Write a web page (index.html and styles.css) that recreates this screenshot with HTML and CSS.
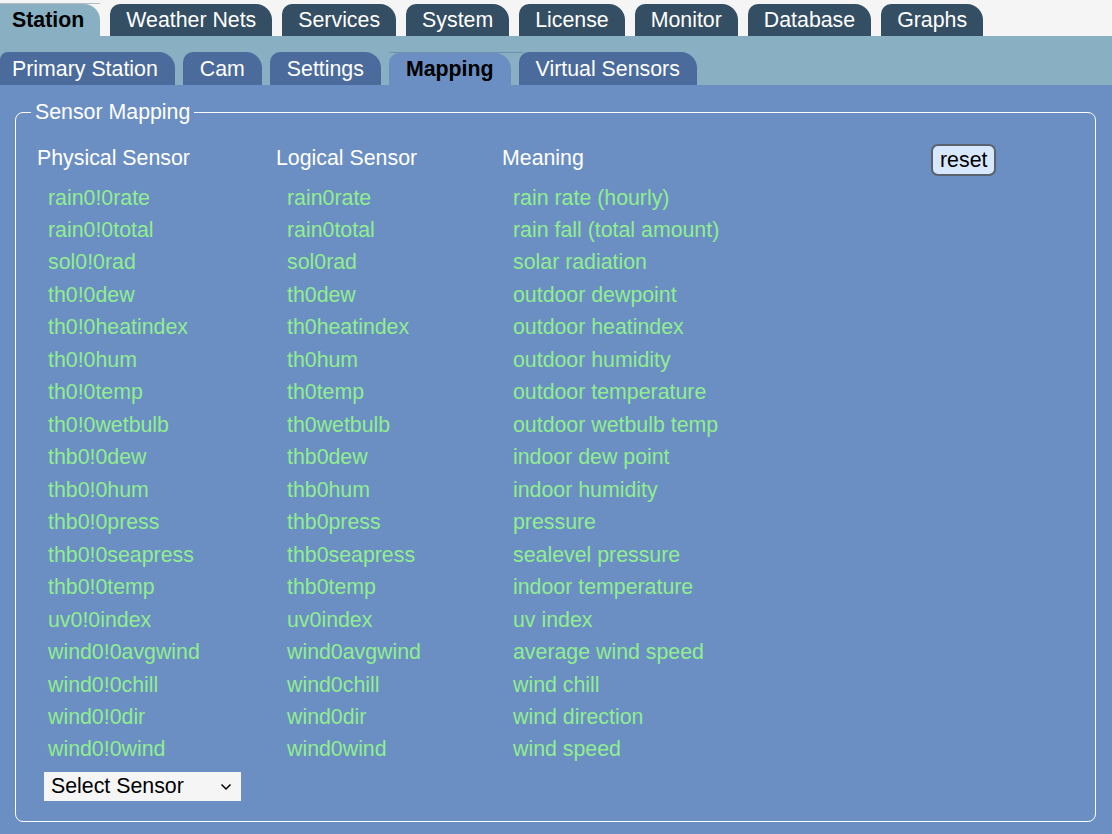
FILE: index.html
```html
<!DOCTYPE html>
<html>
<head>
<meta charset="utf-8">
<link rel="stylesheet" href="styles.css">
</head>
<body>
<div class="topbar">
  <nav class="tabs main-tabs">
    <span class="tab active">Station</span>
    <span class="tab">Weather Nets</span>
    <span class="tab">Services</span>
    <span class="tab">System</span>
    <span class="tab">License</span>
    <span class="tab">Monitor</span>
    <span class="tab">Database</span>
    <span class="tab">Graphs</span>
  </nav>
</div>
<div class="subbar">
  <nav class="tabs sub-tabs">
    <span class="tab">Primary Station</span>
    <span class="tab">Cam</span>
    <span class="tab">Settings</span>
    <span class="tab active">Mapping</span>
    <span class="tab">Virtual Sensors</span>
  </nav>
</div>
<main class="content">
  <fieldset class="mapping">
    <legend>Sensor Mapping</legend>
    <div class="grid">
      <div class="hd">Physical Sensor</div>
      <div class="hd">Logical Sensor</div>
      <div class="hd">Meaning</div>
      <div class="hd"><button class="reset">reset</button></div>

      <div class="cell">rain0!0rate</div><div class="cell">rain0rate</div><div class="cell wide">rain rate (hourly)</div>
      <div class="cell">rain0!0total</div><div class="cell">rain0total</div><div class="cell wide">rain fall (total amount)</div>
      <div class="cell">sol0!0rad</div><div class="cell">sol0rad</div><div class="cell wide">solar radiation</div>
      <div class="cell">th0!0dew</div><div class="cell">th0dew</div><div class="cell wide">outdoor dewpoint</div>
      <div class="cell">th0!0heatindex</div><div class="cell">th0heatindex</div><div class="cell wide">outdoor heatindex</div>
      <div class="cell">th0!0hum</div><div class="cell">th0hum</div><div class="cell wide">outdoor humidity</div>
      <div class="cell">th0!0temp</div><div class="cell">th0temp</div><div class="cell wide">outdoor temperature</div>
      <div class="cell">th0!0wetbulb</div><div class="cell">th0wetbulb</div><div class="cell wide">outdoor wetbulb temp</div>
      <div class="cell">thb0!0dew</div><div class="cell">thb0dew</div><div class="cell wide">indoor dew point</div>
      <div class="cell">thb0!0hum</div><div class="cell">thb0hum</div><div class="cell wide">indoor humidity</div>
      <div class="cell">thb0!0press</div><div class="cell">thb0press</div><div class="cell wide">pressure</div>
      <div class="cell">thb0!0seapress</div><div class="cell">thb0seapress</div><div class="cell wide">sealevel pressure</div>
      <div class="cell">thb0!0temp</div><div class="cell">thb0temp</div><div class="cell wide">indoor temperature</div>
      <div class="cell">uv0!0index</div><div class="cell">uv0index</div><div class="cell wide">uv index</div>
      <div class="cell">wind0!0avgwind</div><div class="cell">wind0avgwind</div><div class="cell wide">average wind speed</div>
      <div class="cell">wind0!0chill</div><div class="cell">wind0chill</div><div class="cell wide">wind chill</div>
      <div class="cell">wind0!0dir</div><div class="cell">wind0dir</div><div class="cell wide">wind direction</div>
      <div class="cell">wind0!0wind</div><div class="cell">wind0wind</div><div class="cell wide">wind speed</div>
    </div>
    <div class="select-wrap">
      <select class="sensor-select"><option>Select Sensor</option></select>
      <svg class="chev" width="12" height="8" viewBox="0 0 12 8"><path d="M1.5 1.5 L6 6 L10.5 1.5" fill="none" stroke="#000" stroke-width="1.5"/></svg>
    </div>
  </fieldset>
</main>
</body>
</html>
```

FILE: styles.css
```css
html, body {
  margin: 0;
  padding: 0;
}
body {
  font-family: "Liberation Sans", Arial, sans-serif;
  font-size: 16pt;
  background: #6b8fc2;
  width: 1112px;
  height: 834px;
  overflow: hidden;
}
.topbar {
  background: #f5f5f5;
  height: 36px;
  display: flex;
  align-items: flex-end;
}
.subbar {
  background: #88b0c2;
  height: 49px;
  display: flex;
  align-items: flex-end;
}
.tabs {
  display: flex;
  align-items: flex-end;
}
.main-tabs {
  gap: 10px;
}
.sub-tabs {
  gap: 8px;
}
.tab {
  position: relative;
  display: flex;
  align-items: center;
  color: #ffffff;
  white-space: nowrap;
  border-radius: 10px 16px 0 0;
  padding-top: 1px;
  box-sizing: border-box;
}
.main-tabs .tab {
  height: 32px;
  padding-left: 16px;
  padding-right: 16px;
  background: #344e64;
}
.main-tabs .tab:first-child {
  padding-left: 12px;
  padding-right: 16px;
  border-radius: 0 16px 0 0;
}
.main-tabs .tab.active {
  background: #88b0c2;
  color: #000;
  font-weight: bold;
}
.main-tabs .tab.active::before {
  content: "";
  position: absolute;
  left: 0;
  right: 0;
  top: -1px;
  height: 1px;
  background: #b4bcc2;
}
.sub-tabs .tab {
  height: 33px;
  padding-left: 17px;
  padding-right: 17px;
  background: #4a6b9b;
}
.sub-tabs .tab:first-child {
  padding-left: 12px;
  padding-right: 17px;
  border-radius: 8px 16px 0 0;
}
.sub-tabs .tab.active {
  background: #6b8fc2;
  color: #000;
  font-weight: bold;
  height: 32px;
}
.sub-tabs .tab.active::before {
  content: "";
  position: absolute;
  left: 0;
  right: -12px;
  top: -1px;
  height: 1px;
  background: #6f8fae;
}
.content {
  padding: 15px 16px 0 15px;
}
.mapping {
  margin: 0;
  border: 1px solid #ffffff;
  border-radius: 8px;
  padding: 12px 16px 20px 21px;
  color: #ffffff;
}
.mapping legend {
  color: #ffffff;
  padding: 0 4px;
  margin-left: -6px;
  line-height: 24px;
}
.grid {
  display: grid;
  grid-template-columns: 239px 226px 429px auto;
  grid-template-rows: 45.5px;
  grid-auto-rows: 32.47px;
  align-items: center;
}
.grid .hd {
  height: 45.5px;
  display: flex;
  align-items: center;
  color: #ffffff;
}
.grid .cell {
  color: #90ee90;
  padding-left: 11px;
  line-height: 32.47px;
  white-space: nowrap;
}
.grid .cell.wide {
  grid-column: span 2;
}
.reset {
  font-family: "Liberation Sans", Arial, sans-serif;
  font-size: 16pt;
  color: #000;
  background: #d8e8fc;
  border: 2px solid #5a6270;
  border-radius: 7px;
  height: 32px;
  padding: 0 7px;
  line-height: 26px;
  margin-top: 2px;
}
.select-wrap {
  position: relative;
  width: 197px;
  margin: 6px 0 0 7px;
}
.sensor-select {
  -webkit-appearance: none;
  appearance: none;
  display: block;
  width: 197px;
  height: 29px;
  border: none;
  border-radius: 0;
  background: #f5f5f5;
  color: #000;
  font-family: "Liberation Sans", Arial, sans-serif;
  font-size: 16pt;
  padding: 0 0 0 7px;
  margin: 0;
}
.chev {
  position: absolute;
  right: 9px;
  top: 11px;
  pointer-events: none;
}
```
